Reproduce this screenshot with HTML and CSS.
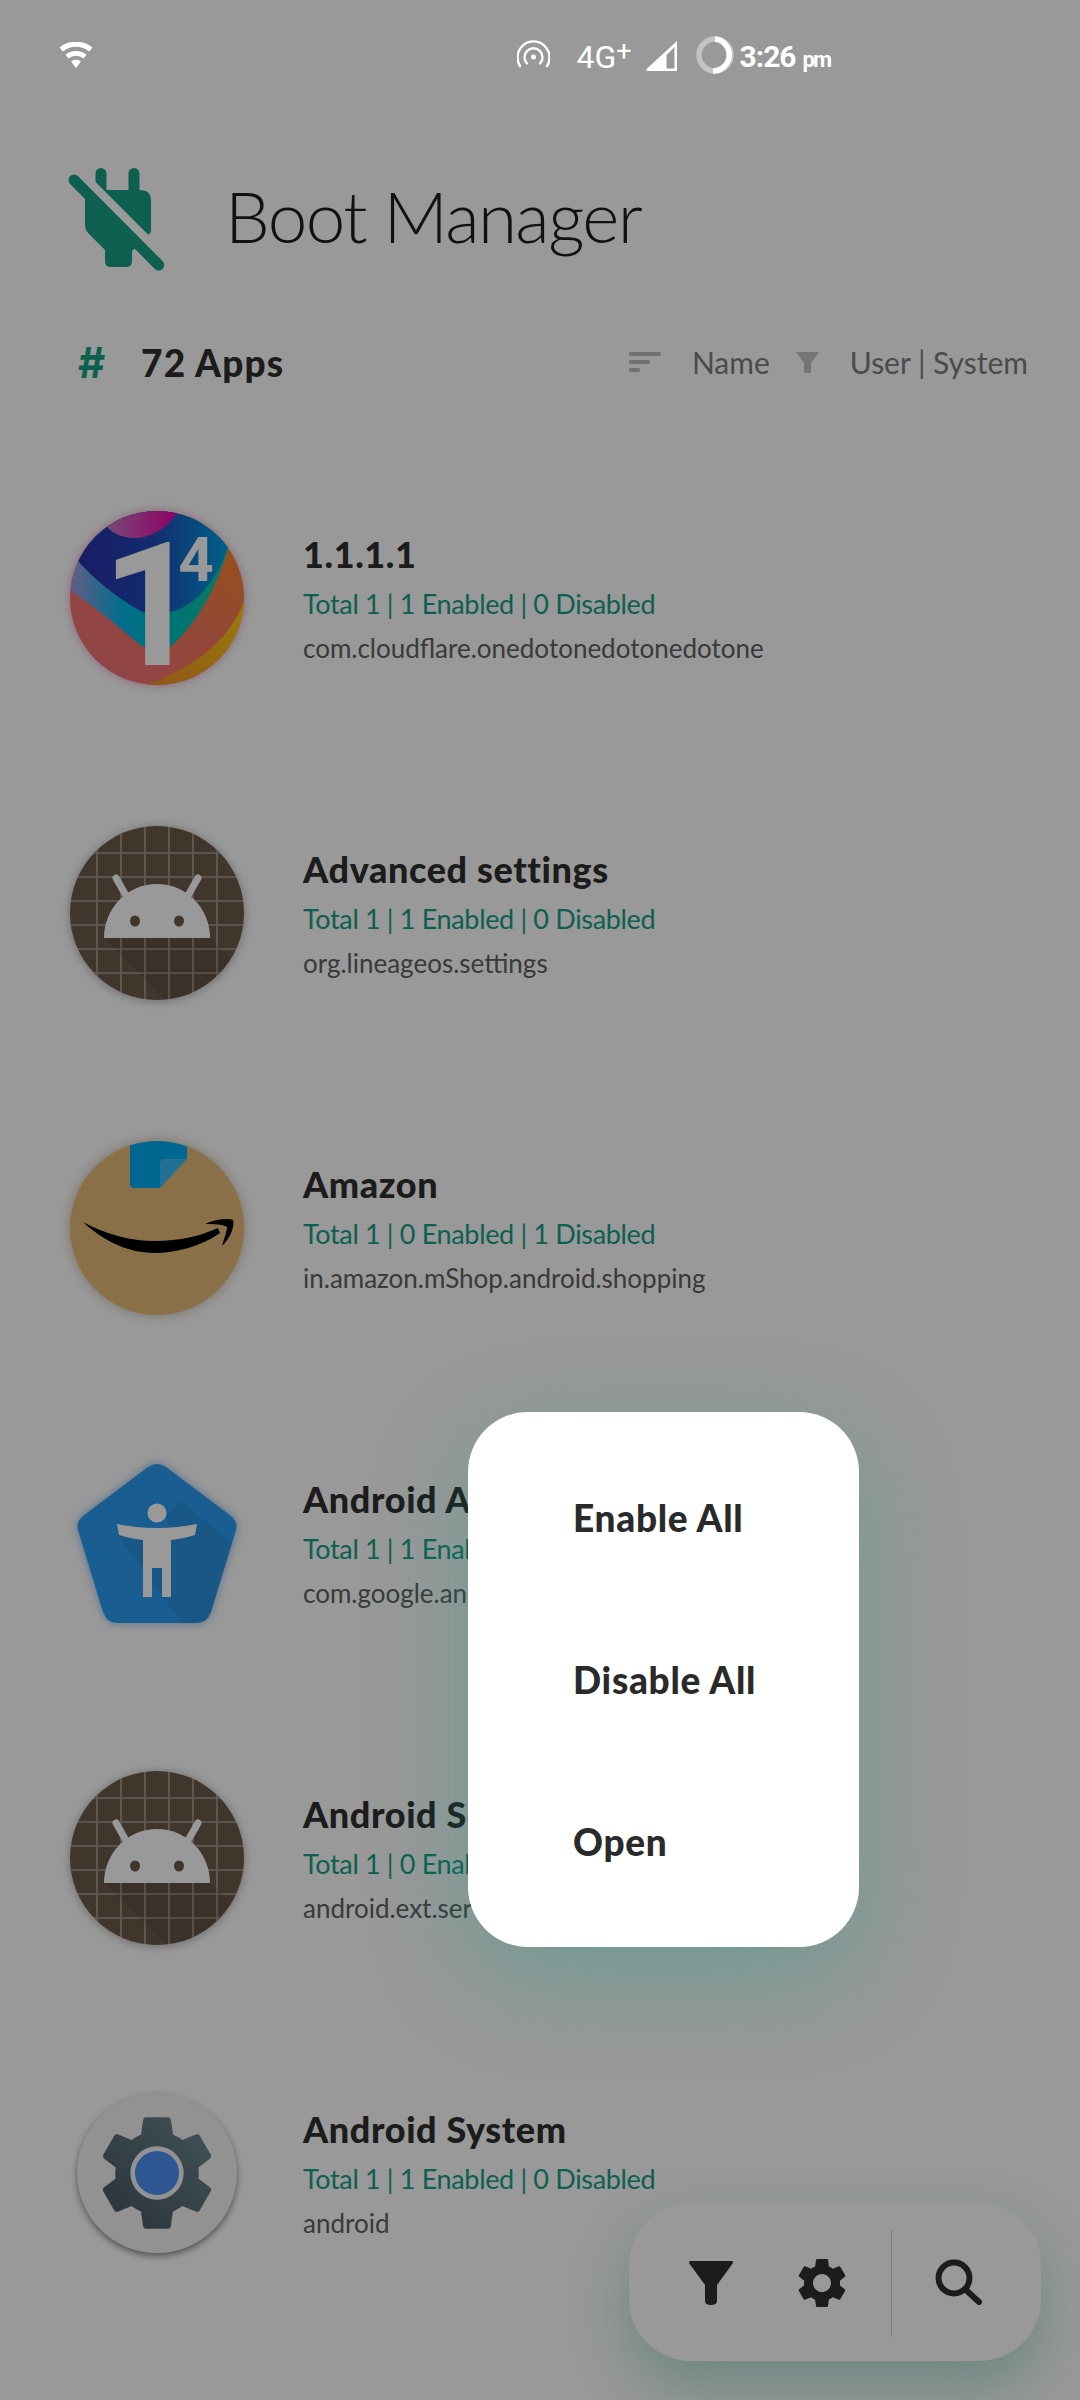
FILE: index.html
```html
<!DOCTYPE html>
<html lang="en">
<head>
<meta charset="utf-8">
<title>Boot Manager</title>
<link rel="stylesheet" href="styles.css">
</head>
<body>
<svg class="defs" width="0" height="0" aria-hidden="true">
  <defs>
    <clipPath id="disc"><circle cx="87" cy="87" r="87"/></clipPath>
    <linearGradient id="g-red" x1="0" y1="1" x2="1" y2="0"><stop offset="0" stop-color="#f27080"/><stop offset=".55" stop-color="#f4785c"/><stop offset="1" stop-color="#fb8a1c"/></linearGradient>
    <linearGradient id="g-yel" x1="0" y1="1" x2="1" y2="0"><stop offset="0" stop-color="#f08d2a"/><stop offset="1" stop-color="#ffd010"/></linearGradient>
    <linearGradient id="g-band" x1="0" y1="0" x2="1" y2="0"><stop offset="0" stop-color="#a89ae0"/><stop offset=".3" stop-color="#00b8e8"/><stop offset=".62" stop-color="#00c0c0"/><stop offset="1" stop-color="#19d090"/></linearGradient>
    <linearGradient id="g-navy" x1="0" y1="0" x2="1" y2="0"><stop offset="0" stop-color="#2a2da8"/><stop offset=".5" stop-color="#2048b8"/><stop offset="1" stop-color="#00a0e4"/></linearGradient>
    <linearGradient id="g-mag" x1="0" y1="0" x2="1" y2="0"><stop offset="0" stop-color="#c878c8"/><stop offset="1" stop-color="#f000a8"/></linearGradient>
    <linearGradient id="g-gear" x1="0" y1="1" x2="1" y2="0"><stop offset="0" stop-color="#445560"/><stop offset=".5" stop-color="#5a7078"/><stop offset="1" stop-color="#6f8a94"/></linearGradient>
    <g id="android-art">
      <circle cx="87" cy="87" r="87" fill="#6d5a49"/>
      <g clip-path="url(#disc)" stroke="#fff" stroke-opacity=".42" stroke-width="1.6">
        <path d="M27 0V174M51 0V174M75 0V174M99 0V174M123 0V174M147 0V174M0 27H174M0 51H174M0 75H174M0 99H174M0 123H174M0 147H174"/>
      </g>
      <path d="M34 112H140L174 146V174H96Z" fill="#000" fill-opacity=".08" clip-path="url(#disc)"/>
      <path d="M46 52L58 73M128 52L116 73" stroke="#fff" stroke-width="7" stroke-linecap="round"/>
      <path d="M34 112a53 54 0 0 1 106 0Z" fill="#fff"/>
      <ellipse cx="65" cy="95" rx="5" ry="5.5" fill="#6d5a49"/>
      <ellipse cx="109" cy="95" rx="5" ry="5.5" fill="#6d5a49"/>
    </g>
  </defs>
</svg>
<main class="phone">
  <header class="status">
    <svg class="st-wifi" viewBox="0 0 36 26"><path d="M18 26L13 19.5a8 8 0 0 1 10 0ZM10.5 16.5L7.5 12.8a16.5 16.5 0 0 1 21 0l-3 3.7a12 12 0 0 0-15 0ZM4.800 9.500L1.500 5.500a26 26 0 0 1 33 0l-3.300 4a21 21 0 0 0-26.400 0Z" fill="#fff"/></svg>
    <div class="st-right">
      <svg class="st-hot" viewBox="0 0 33 28" fill="none" stroke="#fff" stroke-width="2.400" stroke-linecap="round"><circle cx="16.500" cy="17" r="2.500" fill="#fff" stroke="none"/><path d="M10 23.500A9 9 0 1 1 23 23.500"/><path d="M3 26A16 16 0 1 1 30 26"/></svg>
      <span class="st-net">4G<sup class="st-plus">+</sup></span>
      <svg class="st-sig" viewBox="0 0 31 30"><path d="M31 0V30H2Q-1 30 1 27.500ZM28.500 6V27.500H20.500V14Z" fill="#fff" fill-rule="evenodd"/></svg>
      <svg class="st-bat" viewBox="0 0 38 38" fill="none" stroke-width="5.500"><circle cx="19" cy="19" r="16" stroke="#c4c4c4"/><path d="M19 3a16 16 0 0 1 -2 31.900" stroke="#fff"/></svg>
      <span class="st-time">3:26<small class="st-pm">pm</small></span>
    </div>
  </header>

  <section class="brand">
    <svg class="logo" viewBox="0 0 110 115">
      <path d="M35.500 40V13.500a5.500 5.500 0 0 1 11 0V40ZM68.500 40V13.500a5.500 5.500 0 0 1 11 0V40Z" fill="#16a085"/>
      <path d="M25 30H80Q91 30 91 41V72L72 91V101Q72 107 66 107H51Q45 107 45 101V90L29 74Q25 70 25 65Z" fill="#16a085"/>
      <path d="M20.600 13.400L105 98" stroke="#fff" stroke-width="9"/>
      <path d="M14 20L98.700 105" stroke="#16a085" stroke-width="11" stroke-linecap="round"/>
    </svg>
    <h1 class="title">Boot Manager</h1>
  </section>

  <section class="summary">
    <div class="count"><span class="hash">#</span><span class="count-text">72 Apps</span></div>
    <div class="tools">
      <svg class="sort-ico" viewBox="0 0 32 20" fill="#bdbdbd"><rect width="32" height="4" rx="1.500"/><rect y="8" width="21" height="4" rx="1.500"/><rect y="16" width="11" height="4" rx="1.500"/></svg>
      <span class="tool-text">Name</span>
      <svg class="fil-ico" viewBox="0 0 23 21" fill="#c3c3c3"><path d="M0 0H23L15 11V21H8V11Z"/></svg>
      <span class="tool-text">User | System</span>
    </div>
  </section>

  <ul class="list">
    <li class="row">
      <svg class="app-ico ico-glow-a" viewBox="0 0 174 174">
        <g clip-path="url(#disc)">
          <rect width="174" height="174" fill="url(#g-red)"/>
          <path d="M73 174C120 160 160 130 174 90V174Z" fill="url(#g-yel)"/>
          <path d="M0 79C30 100 60 125 73 136H100C130 110 150 70 160 30L174 0H0Z" fill="url(#g-band)"/>
          <path d="M9 51C30 75 60 95 73 101H100C130 95 150 60 158 36L150 0H0V40Z" fill="url(#g-navy)"/>
          <path d="M38 17C50 30 85 35 107 2V-5H38Z" fill="url(#g-mag)"/>
        </g>
        <text class="logo-one" x="131" y="154" text-anchor="end">1</text>
        <text class="logo-four" x="126" y="70" text-anchor="middle">4</text>
      </svg>
      <div class="info">
        <div class="name">1.1.1.1</div>
        <div class="stat">Total 1 | 1 Enabled | 0 Disabled</div>
        <div class="pkg">com.cloudflare.onedotonedotonedotone</div>
      </div>
    </li>
    <li class="row">
      <svg class="app-ico ico-glow-b" viewBox="0 0 174 174"><use href="#android-art"/></svg>
      <div class="info">
        <div class="name">Advanced settings</div>
        <div class="stat">Total 1 | 1 Enabled | 0 Disabled</div>
        <div class="pkg">org.lineageos.settings</div>
      </div>
    </li>
    <li class="row">
      <svg class="app-ico ico-glow-c" viewBox="0 0 174 174">
        <circle cx="87" cy="87" r="87" fill="#e6bb78"/>
        <g clip-path="url(#disc)">
          <path d="M60 -2H117V18L90 47H64Q60 47 60 43Z" fill="#00aef0"/>
          <path d="M90 47L117 18H95Q90 18 90 23Z" fill="#fff" fill-opacity=".22"/>
        </g>
        <path d="M13 81C35 93 60 100 85 100C110 100 130 95 148 87L150 92C130 106 105 112 85 112C55 112 30 97 13 81Z" fill="#000"/>
        <path d="M135 83C145 78 158 77 163 79C165 85 160 98 152 105C154 98 157 90 157 86C152 83 143 83 135 83Z" fill="#000"/>
      </svg>
      <div class="info">
        <div class="name">Amazon</div>
        <div class="stat">Total 1 | 0 Enabled | 1 Disabled</div>
        <div class="pkg">in.amazon.mShop.android.shopping</div>
      </div>
    </li>
    <li class="row">
      <svg class="app-ico ico-glow-d" viewBox="0 0 174 174">
        <path d="M78 11Q87 5 96 11L161 60Q168 66 166 74L141 156Q137 167 127 167H47Q37 167 33 156L8 74Q6 66 13 60Z" fill="#2c9cf2"/>
        <path d="M47 78L112 167H127Q137 167 141 156L162 88L112 45L96 60L100 82Z" fill="#000" fill-opacity=".07"/>
        <circle cx="87" cy="57" r="9.500" fill="#fff"/>
        <path d="M47 68Q87 76 127 68L125 79Q112 83 101 84V141H92V112H82V141H73V84Q62 83 49 79Z" fill="#fff"/>
      </svg>
      <div class="info">
        <div class="name">Android Accessibility Suite</div>
        <div class="stat">Total 1 | 1 Enabled | 0 Disabled</div>
        <div class="pkg">com.google.android.marvin.talkback</div>
      </div>
    </li>
    <li class="row">
      <svg class="app-ico ico-glow-b" viewBox="0 0 174 174"><use href="#android-art"/></svg>
      <div class="info">
        <div class="name">Android Services Library</div>
        <div class="stat">Total 1 | 0 Enabled | 1 Disabled</div>
        <div class="pkg">android.ext.services</div>
      </div>
    </li>
    <li class="row">
      <svg class="app-ico ico-glow-e" viewBox="0 0 174 174">
        <circle cx="87" cy="87" r="80" fill="#f3f3f3"/>
        <g transform="translate(17.400 17.400) scale(5.800)">
          <path fill="url(#g-gear)" d="M19.140 12.940c.04-.3.06-.61.06-.94 0-.32-.02-.64-.07-.94l2.030-1.580c.18-.14.23-.41.12-.61l-1.920-3.320c-.12-.22-.37-.29-.59-.22l-2.390.96c-.5-.38-1.030-.7-1.620-.94l-.36-2.540c-.04-.24-.24-.41-.48-.41h-3.840c-.24 0-.43.17-.47.41l-.36 2.540c-.59.24-1.130.57-1.620.94l-2.390-.96c-.22-.08-.47 0-.59.22L2.740 8.870c-.12.21-.08.47.12.61l2.030 1.580c-.05.3-.09.63-.09.94s.02.64.07.94l-2.030 1.580c-.18.14-.23.41-.12.61l1.920 3.320c.12.22.37.29.59.22l2.390-.96c.5.38 1.030.7 1.620.94l.36 2.540c.05.24.24.41.48.41h3.840c.24 0 .44-.17.47-.41l.36-2.540c.59-.24 1.130-.56 1.620-.94l2.390.96c.22.08.47 0 .59-.22l1.920-3.320c.12-.22.07-.47-.12-.61l-2.010-1.580z"/>
          <circle cx="12" cy="12" r="4.600" fill="#f3f3f3"/>
          <circle cx="12" cy="12" r="3.800" fill="#4d8ff5"/>
        </g>
      </svg>
      <div class="info">
        <div class="name">Android System</div>
        <div class="stat">Total 1 | 1 Enabled | 0 Disabled</div>
        <div class="pkg">android</div>
      </div>
    </li>
  </ul>

  <nav class="dock">
    <svg class="dock-filter" viewBox="0 0 44 44" fill="#2f2f2f"><path d="M1 0H43Q44 0 44 2L28 24V40Q28 44 22 44Q16 44 16 40V24L0 2Q0 0 1 0Z"/></svg>
    <svg class="dock-gear" viewBox="0 0 24 24" fill="#2f2f2f"><path fill-rule="evenodd" d="M19.140 12.940c.04-.3.06-.61.06-.94 0-.32-.02-.64-.07-.94l2.030-1.580c.18-.14.23-.41.12-.61l-1.920-3.320c-.12-.22-.37-.29-.59-.22l-2.390.96c-.5-.38-1.030-.7-1.620-.94l-.36-2.540c-.04-.24-.24-.41-.48-.41h-3.840c-.24 0-.43.17-.47.41l-.36 2.540c-.59.24-1.130.57-1.620.94l-2.390-.96c-.22-.08-.47 0-.59.22L2.740 8.870c-.12.21-.08.47.12.61l2.030 1.580c-.05.3-.09.63-.09.94s.02.64.07.94l-2.030 1.580c-.18.14-.23.41-.12.61l1.920 3.320c.12.22.37.29.59.22l2.390-.96c.5.38 1.030.7 1.620.94l.36 2.540c.05.24.24.41.48.41h3.840c.24 0 .44-.17.47-.41l.36-2.540c.59-.24 1.130-.56 1.620-.94l2.390.96c.22.08.47 0 .59-.22l1.920-3.320c.12-.22.07-.47-.12-.61l-2.010-1.580zM12 15.600c-1.980 0-3.600-1.620-3.600-3.600s1.620-3.600 3.600-3.600 3.600 1.620 3.600 3.600-1.620 3.600-3.600 3.600z"/></svg>
    <span class="dock-div"></span>
    <svg class="dock-search" viewBox="0 0 48 46" fill="none" stroke="#2f2f2f" stroke-width="6" stroke-linecap="round"><circle cx="19" cy="19" r="15.500"/><path d="M31 31L44 43"/></svg>
  </nav>

  <div class="scrim"></div>

  <div class="menu">
    <div class="menu-item">Enable All</div>
    <div class="menu-item">Disable All</div>
    <div class="menu-item">Open</div>
  </div>
</main>
</body>
</html>
```

FILE: styles.css
```css
* { box-sizing: border-box; }
html, body { margin: 0; padding: 0; background: #fff; }
.defs { position: absolute; }
.phone {
  position: relative;
  width: 1080px;
  height: 2400px;
  overflow: hidden;
  background: #fff;
  font-family: "Lato", "Open Sans", sans-serif;
  display: flex;
  flex-direction: column;
}

/* status bar */
.status {
  position: relative;
  z-index: 3;
  height: 110px;
  flex: none;
  display: flex;
  justify-content: space-between;
  align-items: flex-start;
  padding: 36px 250px 0 58px;
}
.st-wifi { width: 36px; height: 26px; margin-top: 6px; }
.st-right { display: flex; align-items: flex-start; }
.st-hot { width: 33px; height: 28px; margin-top: 4px; margin-right: 26px; }
.st-net { color: #fff; font: 400 32px/32px "Roboto", sans-serif; margin-top: 5px; width: 55px; white-space: nowrap; }
.st-plus { font-size: 27px; line-height: 0; vertical-align: 8px; }
.st-sig { width: 31px; height: 30px; margin: 5px 0 0 15px; }
.st-bat { width: 38px; height: 38px; margin-left: 19px; }
.st-time { color: #fff; font: 700 30px/36px "Roboto", sans-serif; margin: 3px 0 0 5px; letter-spacing: -1px; white-space: nowrap; }
.st-pm { font-size: 22px; font-weight: 700; margin-left: 7px; letter-spacing: -2px; }

/* brand */
.brand { flex: none; height: 220px; display: flex; align-items: flex-start; padding: 50px 0 0 60px; }
.logo { width: 110px; height: 115px; flex: none; }
.title { margin: 6px 0 0 55px; font-size: 71px; line-height: 100px; font-weight: 300; letter-spacing: -1.6px; color: #1d1d1d; white-space: nowrap; }

/* summary */
.summary { flex: none; height: 64px; display: flex; justify-content: space-between; align-items: center; padding: 0 52px 0 78px; }
.count { display: flex; align-items: center; }
.hash { color: #16a085; font: 700 42px "Inter", sans-serif; width: 63px; }
.count-text { color: #2f2f2f; font-size: 37px; font-weight: 900; letter-spacing: 1.2px; white-space: nowrap; }
.tools { display: flex; align-items: center; }
.tool-text { color: #7d7d7d; font-size: 30px; font-weight: 400; white-space: nowrap; }
.sort-ico { width: 32px; height: 20px; margin-right: 31px; }
.fil-ico { width: 23px; height: 21px; margin: 0 31px 0 26px; }

/* list */
.list { list-style: none; margin: 46px 0 0; padding: 0; }
.row { height: 315px; display: flex; align-items: center; gap: 59px; padding-left: 70px; }
.app-ico { width: 174px; height: 174px; flex: none; overflow: visible; }
.ico-glow-a { filter: drop-shadow(0 0 5px rgba(200, 60, 130, .45)); }
.ico-glow-b { filter: drop-shadow(0 1px 5px rgba(60, 50, 40, .4)); }
.ico-glow-c { filter: drop-shadow(0 0 6px rgba(120, 90, 40, .4)); }
.ico-glow-d { filter: drop-shadow(0 0 5px rgba(20, 110, 210, .5)); }
.ico-glow-e { filter: drop-shadow(0 3px 3px rgba(0, 0, 0, .45)); }
.logo-one { font: 700 173px "Roboto", sans-serif; fill: #fff; }
.logo-four { font: 700 62px "Roboto", sans-serif; fill: #fff; }
.info { display: flex; flex-direction: column; margin-top: 3px; }
.name { color: #2f2f2f; font-size: 36px; line-height: 53px; font-weight: 900; letter-spacing: .6px; white-space: nowrap; }
.stat { color: #16a085; font-size: 27px; line-height: 45px; letter-spacing: -.35px; white-space: nowrap; }
.pkg { color: #616161; font-size: 26px; line-height: 45px; white-space: nowrap; }

/* dock */
.dock {
  position: absolute;
  left: 629px;
  top: 2203px;
  width: 412px;
  height: 158px;
  border-radius: 62px;
  background: #fff;
  box-shadow: 0 26px 60px rgba(22, 160, 133, .32);
}
.dock-filter, .dock-gear, .dock-search, .dock-div { position: absolute; }
.dock-filter { left: 60px; top: 58px; width: 44px; height: 44px; }
.dock-gear { left: 163px; top: 50px; width: 60px; height: 60px; }
.dock-div { left: 262px; top: 27px; width: 1px; height: 107px; background: rgba(0, 0, 0, .2); }
.dock-search { left: 306px; top: 56px; width: 48px; height: 46px; }

/* overlay */
.scrim { position: absolute; inset: 0; z-index: 1; background: rgba(0, 0, 0, .4); }
.menu {
  position: absolute;
  z-index: 2;
  left: 468px;
  top: 1412px;
  width: 391px;
  height: 535px;
  padding: 24px 0 25px 105px;
  border-radius: 60px;
  background: #fff;
  box-shadow: 0 30px 100px rgba(22, 160, 133, .32);
  display: flex;
  flex-direction: column;
}
.menu-item { height: 162px; display: flex; align-items: center; color: #2a2a2a; font-size: 37px; font-weight: 900; letter-spacing: .7px; white-space: nowrap; }
```
